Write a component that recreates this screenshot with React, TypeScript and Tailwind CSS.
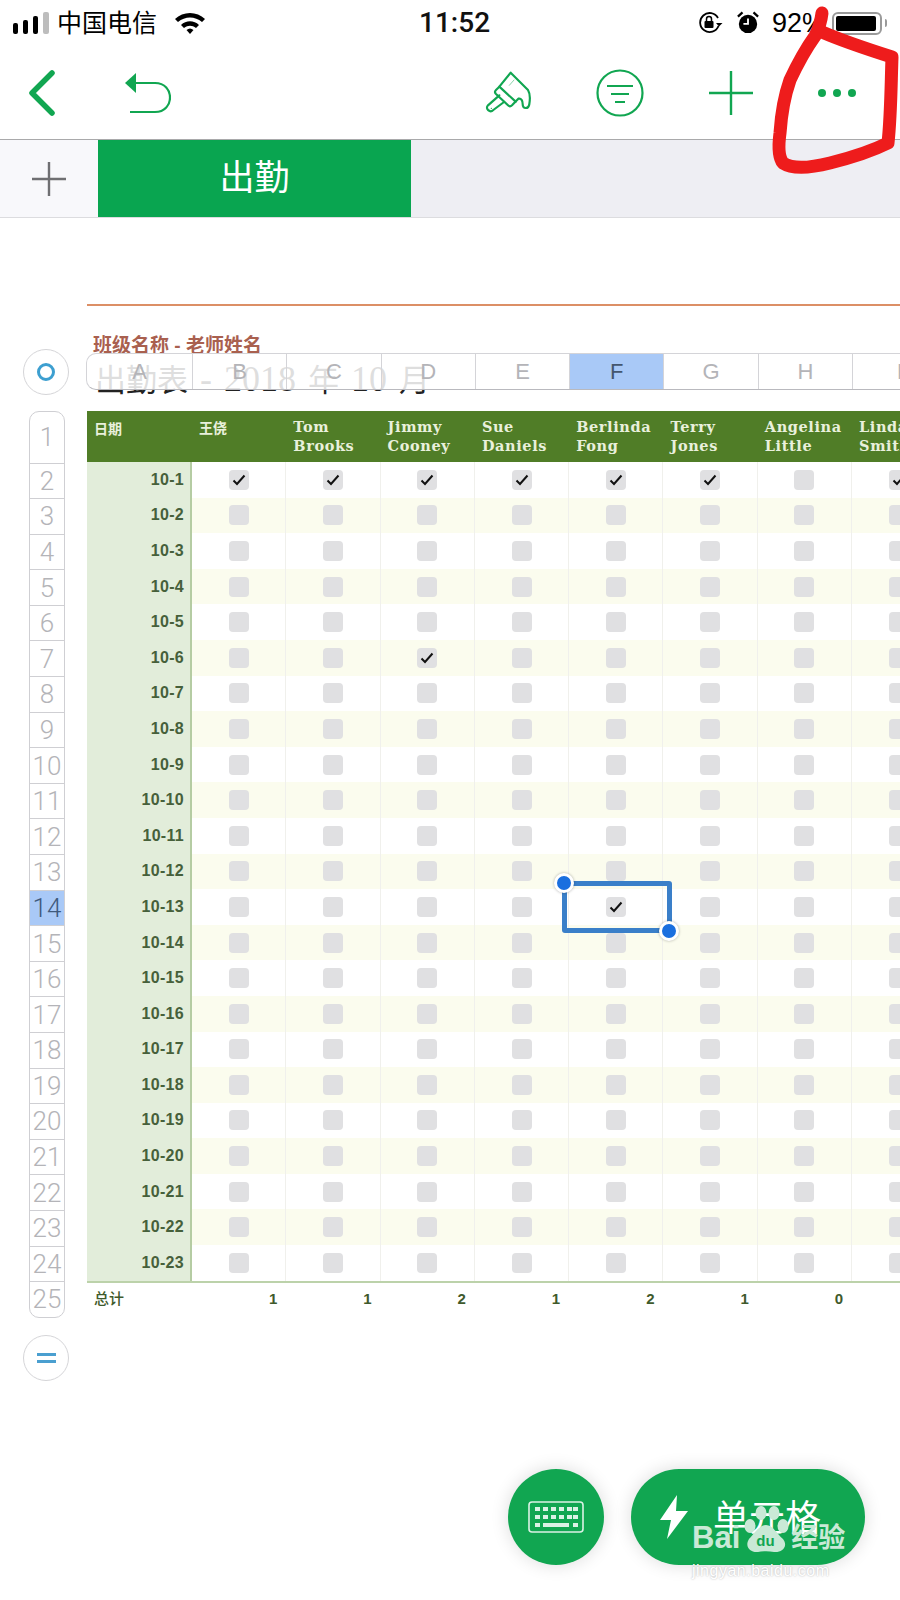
import type { FC } from 'react'

const SANS = "font-['Liberation_Sans','Noto_Sans_CJK_SC',sans-serif]"
const GREEN = '#11a651'

const names: [string, string][] = [
  ['王侥', ''],
  ['Tom', 'Brooks'],
  ['Jimmy', 'Cooney'],
  ['Sue', 'Daniels'],
  ['Berlinda', 'Fong'],
  ['Terry', 'Jones'],
  ['Angelina', 'Little'],
  ['Linda', 'Smith'],
]
const letters = ['A', 'B', 'C', 'D', 'E', 'F', 'G', 'H', 'I']
const totals = ['1', '1', '2', '1', '2', '1', '0', '']
const days = Array.from({ length: 23 }, (_, i) => i + 1)

// 已勾选的格子: 日期-列号
const checked = new Set(['1-0', '1-1', '1-2', '1-3', '1-4', '1-5', '1-7', '6-2', '13-4'])

const Check: FC<{ on: boolean }> = ({ on }) => (
  <div className="w-[20px] h-[20px] rounded-[4px] bg-[#e0e0e2] flex items-center justify-center">
    {on && (
      <svg width="14" height="12" viewBox="0 0 14 12" fill="none">
        <path d="M1.5 6.5 L5 10 L12.5 1.5" stroke="#111" strokeWidth="2" />
      </svg>
    )}
  </div>
)

const StatusBar: FC = () => (
  <div className="h-[46px] relative flex items-center text-black">
    <div className="flex items-end gap-[5px] ml-[13px] h-[22px] w-[36px] shrink-0">
      <div className="w-[5px] h-[11px] bg-black rounded-[2px] shrink-0" />
      <div className="w-[5px] h-[14px] bg-black rounded-[2px] shrink-0" />
      <div className="w-[5px] h-[18px] bg-black rounded-[2px] shrink-0" />
      <div className="w-[6px] h-[22px] bg-[#bdbdbd] rounded-[2px] shrink-0" />
    </div>
    <span className={`ml-[8px] w-[101px] text-[25px] leading-none whitespace-nowrap ${SANS}`}>中国电信</span>
    <svg className="ml-[16px]" width="32" height="24" viewBox="0 0 32 24">
      <path d="M1 8 C9 0 23 0 31 8 L28 11 C21 5 11 5 4 11 Z" fill="#000" />
      <path d="M7 14 C12 9 20 9 25 14 L22 17 C18 14 14 14 10 17 Z" fill="#000" />
      <path d="M12.5 19 C15 17 17 17 19.5 19 L16 23 Z" fill="#000" />
    </svg>
    <span className="ml-[213px] w-[67px] text-[28px] font-medium leading-none text-[#111] font-['Roboto',sans-serif]">11:52</span>
    <svg className="ml-[212px]" width="25" height="22" viewBox="0 0 25 22" fill="none">
      <path d="M20.5 14 A9.5 9.5 0 1 1 20 6" stroke="#000" strokeWidth="1.8" />
      <path d="M18 11 L21 14.5 L24.5 11" fill="#000" />
      <rect x="6.5" y="9" width="9" height="7" rx="1" fill="#000" />
      <path d="M8.5 9 V7 A2.5 2.5 0 0 1 13.5 7 V9" stroke="#000" strokeWidth="1.5" />
    </svg>
    <svg className="ml-[14px]" width="22" height="24" viewBox="0 0 24 26">
      <circle cx="12" cy="14" r="10" fill="#000" />
      <path d="M12 8 V14 H7" stroke="#fff" strokeWidth="2" fill="none" />
      <path d="M1 6 L6 1.5 M23 6 L18 1.5" stroke="#000" strokeWidth="2.5" />
    </svg>
    <span className={`ml-[13px] w-[60px] shrink-0 text-[27px] leading-none ${SANS}`}>92%</span>
    <div className="w-[50px] h-[23px] border-2 border-[#9a9a9a] rounded-[6px] p-[2px] shrink-0">
      <div className="w-[40px] h-full bg-black rounded-[2px]" />
    </div>
    <div className="ml-[3px] w-[2px] h-[8px] bg-[#9a9a9a] rounded-r-[2px] shrink-0" />
  </div>
)

const Toolbar: FC = () => (
  <div className="h-[94px] relative border-b border-[#a9a9ab] text-[#11a651]">
    <div className="h-full flex items-center">
      <svg className="ml-[28px]" width="28" height="46" viewBox="0 0 28 46" fill="none">
        <path d="M24 3 L4 23 L24 43" stroke={GREEN} strokeWidth="5.5" strokeLinecap="round" strokeLinejoin="round" />
      </svg>
      <svg className="ml-[67px]" width="48" height="42" viewBox="0 0 48 42" fill="none">
        <path d="M3 11 H32 C52 11 52 40 32 40 H7" stroke={GREEN} strokeWidth="2.2" />
        <path d="M13 1 V21 L2 11 Z" fill={GREEN} />
      </svg>
      <svg className="ml-[313px]" width="50" height="45" viewBox="40 30 150 135" fill="none" stroke={GREEN} strokeWidth="6.5" strokeLinejoin="round" strokeLinecap="round">
        <path d="M120 38 L172 90 C178 100 178 120 176 132 C174 148 156 148 156 132 C156 122 152 114 143 116 L124 136 C120 140 116 140 112 136 L76 102 C72 98 72 94 76 90 L86 80 Z" />
        <path d="M86 80 L135 125" />
        <path d="M86 106 L52 136 C42 146 58 160 68 150 L100 126" />
        <path d="M130 60 L116 76" strokeWidth="3" strokeOpacity="0.5" />
        <circle cx="62" cy="145" r="2" fill={GREEN} stroke="none" />
      </svg>
      <svg className="ml-[62px]" width="48" height="48" viewBox="0 0 48 48" fill="none" stroke={GREEN} strokeWidth="2.2">
        <circle cx="24" cy="24" r="22.5" />
        <path d="M11 17 H37 M15 25 H33 M19 33 H29" />
      </svg>
      <svg className="ml-[64px]" width="46" height="46" viewBox="0 0 46 46" fill="none" stroke={GREEN} strokeWidth="2.4">
        <path d="M1 23 H45 M23 1 V45" />
      </svg>
      <div className="ml-[64px] flex gap-[7px]">
        <div className="w-[8px] h-[8px] rounded-full bg-[#11a651]" />
        <div className="w-[8px] h-[8px] rounded-full bg-[#11a651]" />
        <div className="w-[8px] h-[8px] rounded-full bg-[#11a651]" />
      </div>
    </div>
  </div>
)

const TabBar: FC = () => (
  <div className="h-[78px] flex bg-[#eeeef3] border-b border-[#dcdcdf]">
    <div className="w-[98px] bg-[#f8f8fb] flex items-center justify-center">
      <svg width="34" height="34" viewBox="0 0 34 34" stroke="#6f6f72" strokeWidth="2.4">
        <path d="M0 17 H34 M17 0 V34" />
      </svg>
    </div>
    <div className={`w-[313px] bg-[#09a550] flex items-center justify-center text-white text-[35px] ${SANS}`}>出勤</div>
  </div>
)

const RowRail: FC = () => (
  <div className="w-[87px] shrink-0 pt-[131px] pl-[23px]">
    <div className="w-[46px] h-[46px] rounded-full border border-[#d5d5d8] bg-white flex items-center justify-center">
      <div className="w-[18px] h-[18px] rounded-full border-[3px] border-[#3d9fd0]" />
    </div>
    <div className="mt-[16px] ml-[6px] w-[36px] border border-[#cfcfd3] rounded-[10px] overflow-hidden bg-white">
      {Array.from({ length: 25 }, (_, i) => i + 1).map((n) => (
        <div
          key={n}
          className={`flex items-center justify-center text-[26px] leading-none border-[#cfcfd3] font-['Roboto',sans-serif] font-light ${
            n === 1 ? 'h-[50.5px]' : 'h-[35.6px] border-t'
          } ${n === 14 ? 'bg-[#a9c9f7] text-[#3f5a7d]' : 'text-[#b4b4b8]'}`}
        >
          {n}
        </div>
      ))}
    </div>
    <div className="mt-[17px] w-[46px] h-[46px] rounded-full border border-[#d5d5d8] bg-white flex flex-col items-center justify-center gap-[4px]">
      <div className="w-[19px] h-[3px] bg-[#4a9fd0]" />
      <div className="w-[19px] h-[3px] bg-[#4a9fd0]" />
    </div>
  </div>
)

const Sheet: FC = () => (
  <div className="relative flex-1 pt-[86px]">
    <div className="h-[2px] bg-[#dc8f66]" />
    <div className="h-[105px] pl-[6px] pt-[27px]">
      <div className={`text-[19px] leading-[26px] font-bold whitespace-nowrap text-[#a9604f] ${SANS}`}>班级名称 - 老师姓名</div>
      <div className={`ml-[2px] text-[36px] leading-[40px] whitespace-nowrap text-[#222] [word-spacing:3px] font-['Liberation_Serif','Noto_Sans_CJK_SC',serif]`}>
        <span className="text-[31px]">出勤表</span> - 2018 <span className="text-[31px]">年</span> 10 <span className="text-[31px]">月</span>
      </div>
    </div>

    {/* 列标题条, 盖在表格标题上面 */}
    <div className="absolute top-[135px] -left-[1px] w-[860px] h-[37px] flex bg-white/85 border border-[#d4d4d8] border-b-[#b9b9be] rounded-tl-[10px] rounded-bl-[10px]">
      {letters.map((l, i) => (
        <div
          key={l}
          className={`shrink-0 flex items-center justify-center text-[22px] ${SANS} ${
            i === 0 ? 'w-[105px]' : 'w-[94.3px] border-l border-[#d4d4d8]'
          } ${l === 'F' ? 'bg-[#a9c9f7] text-[#44566e]' : 'text-[#b4b4b8]'}`}
        >
          {l}
        </div>
      ))}
    </div>

    <div className="grid grid-cols-[105px_repeat(8,94.3px)] w-max">
      <div className={`h-[51px] bg-[#507d27] pl-[7px] pt-[8px] text-[14px] font-bold text-[#e9f0dc] ${SANS}`}>日期</div>
      {names.map(([a, b]) => (
        <div
          key={a}
          className={`h-[51px] bg-[#507d27] pl-[7px] pt-[6px] text-[#e9f0dc] font-bold text-[14.5px] leading-[19px] whitespace-nowrap tracking-[0.6px] font-['DejaVu_Serif','Noto_Sans_CJK_SC',serif]`}
        >
          {b ? (
            <>
              <div>{a}</div>
              <div>{b}</div>
            </>
          ) : (
            <div className={`pt-[2px] text-[14px] tracking-normal ${SANS}`}>{a}</div>
          )}
        </div>
      ))}

      {days.map((d) => (
        <div key={d} className="contents">
          <div className={`h-[35.6px] bg-[#e2edda] border-r-2 border-[#b5cca3] flex items-center justify-end pr-[6px] text-[16px] font-bold text-[#46603a] tracking-[0.3px] ${SANS}`}>
            10-{d}
          </div>
          {names.map(([a], i) => (
            <div
              key={a}
              className={`h-[35.6px] flex items-center justify-center border-r border-[#f0f0ec] ${d % 2 === 0 ? 'bg-[#fbfcee]' : 'bg-white'}`}
            >
              <Check on={checked.has(`${d}-${i}`)} />
            </div>
          ))}
        </div>
      ))}

      <div className="col-span-9 h-[2px] bg-[#bcd2aa]" />

      <div className={`h-[34px] pl-[7px] flex items-center text-[15px] font-medium text-[#3f5a2c] ${SANS}`}>总计</div>
      {totals.map((t, i) => (
        <div key={i} className={`h-[34px] pr-[9px] flex items-center justify-end text-[15px] font-bold text-[#3f5a2c] ${SANS}`}>
          {t}
        </div>
      ))}
    </div>

    {/* 选中框 */}
    <div className="absolute left-[475px] top-[663px] w-[110px] h-[52px] border-[5px] border-[#3a7fc9] rounded-[3px]" />
    <div className="absolute left-[467px] top-[655px] w-[20px] h-[20px] rounded-full bg-[#1a6fdf] border-[3px] border-white shadow-[0_0_3px_rgba(0,0,0,0.3)]" />
    <div className="absolute left-[572px] top-[703px] w-[20px] h-[20px] rounded-full bg-[#1a6fdf] border-[3px] border-white shadow-[0_0_3px_rgba(0,0,0,0.3)]" />
  </div>
)

const FloatingButtons: FC = () => (
  <div className="absolute left-[508px] top-[1469px] flex gap-[27px]">
    <div className="w-[96px] h-[96px] rounded-full bg-[#11a651] shadow-[0_0_18px_rgba(0,0,0,0.14)] flex items-center justify-center">
      <svg width="56" height="32" viewBox="0 0 56 32" fill="none">
        <rect x="1" y="1" width="54" height="30" rx="3" stroke="#fff" strokeOpacity="0.85" strokeWidth="1.6" />
        {[7, 15, 23, 31, 39, 45].map((x) => (
          <rect key={x} x={x} y="6" width="5" height="4" fill="#fff" fillOpacity="0.85" />
        ))}
        {[7, 15, 23, 31, 39, 45].map((x) => (
          <rect key={x} x={x} y="14" width="5" height="4" fill="#fff" fillOpacity="0.85" />
        ))}
        <rect x="7" y="22" width="5" height="4" fill="#fff" fillOpacity="0.85" />
        <rect x="15" y="22" width="26" height="4" fill="#fff" fillOpacity="0.85" />
        <rect x="45" y="22" width="5" height="4" fill="#fff" fillOpacity="0.85" />
      </svg>
    </div>
    <div className="w-[234px] h-[96px] rounded-full bg-[#11a651] shadow-[0_0_18px_rgba(0,0,0,0.14)] flex items-center">
      <svg className="ml-[28px]" width="30" height="44" viewBox="0 0 30 44">
        <path d="M18 0 L1 25 H12 L8 44 L29 16 H17 Z" fill="#fff" />
      </svg>
      <span className={`ml-[24px] mt-[4px] text-[36px] leading-none text-white whitespace-nowrap ${SANS}`}>单元格</span>
    </div>
  </div>
)

const Watermark: FC = () => (
  <div className="absolute left-[692px] top-[1505px] w-[208px] text-[#c9e9d6] pointer-events-none">
    <div className="flex items-end h-[48px]">
      <span className={`text-[31px] leading-[30px] font-bold ${SANS}`}>Bai</span>
      <div className="relative ml-[3px] w-[46px] h-[48px] shrink-0">
        <svg className="absolute inset-0" width="46" height="48" viewBox="0 0 46 48" fill="#c9e9d6">
          <ellipse cx="7" cy="21" rx="5.5" ry="7" />
          <ellipse cx="18" cy="8" rx="5.5" ry="7" />
          <ellipse cx="31" cy="8" rx="5.5" ry="7" />
          <ellipse cx="40" cy="21" rx="5.5" ry="7" />
          <path d="M23 20 C30 20 34 29 40 34 C46 42 38 48 31 47 C26 46 20 46 15 47 C8 48 1 42 6 34 C11 29 16 20 23 20 Z" />
        </svg>
        <span className={`absolute left-[13px] top-[28px] text-[15px] leading-none font-bold text-[#11a651] ${SANS}`}>du</span>
      </div>
      <span className={`ml-[2px] text-[27px] leading-[30px] font-bold whitespace-nowrap ${SANS}`}>经验</span>
    </div>
    <div className={`mt-[9px] text-[16px] leading-[18px] tracking-[0.5px] text-white ${SANS} [text-shadow:0_0_2px_rgba(0,0,0,0.3)]`}>jingyan.baidu.com</div>
  </div>
)

const App: FC = () => (
  <div className="w-[900px] h-[1600px] relative overflow-hidden bg-white">
    <StatusBar />
    <Toolbar />
    <TabBar />
    <div className="flex">
      <RowRail />
      <Sheet />
    </div>
    <FloatingButtons />
    <Watermark />
    {/* 红笔圈 */}
    <svg className="absolute left-0 top-0 pointer-events-none" width="900" height="200" viewBox="0 0 900 200" fill="none">
      <path
        d="M822 13 C821 22 819 28 815 36 C805 50 797 65 790 80 C783 100 781 118 780 133 C778 148 779 158 783 163 C792 169 810 168 830 163 C850 158 870 152 888 143 C891 115 891 85 892 57 C870 50 845 42 822 32"
        stroke="#ee1c1c"
        strokeWidth="13"
        strokeLinecap="round"
        strokeLinejoin="round"
      />
    </svg>
  </div>
)

export default App
